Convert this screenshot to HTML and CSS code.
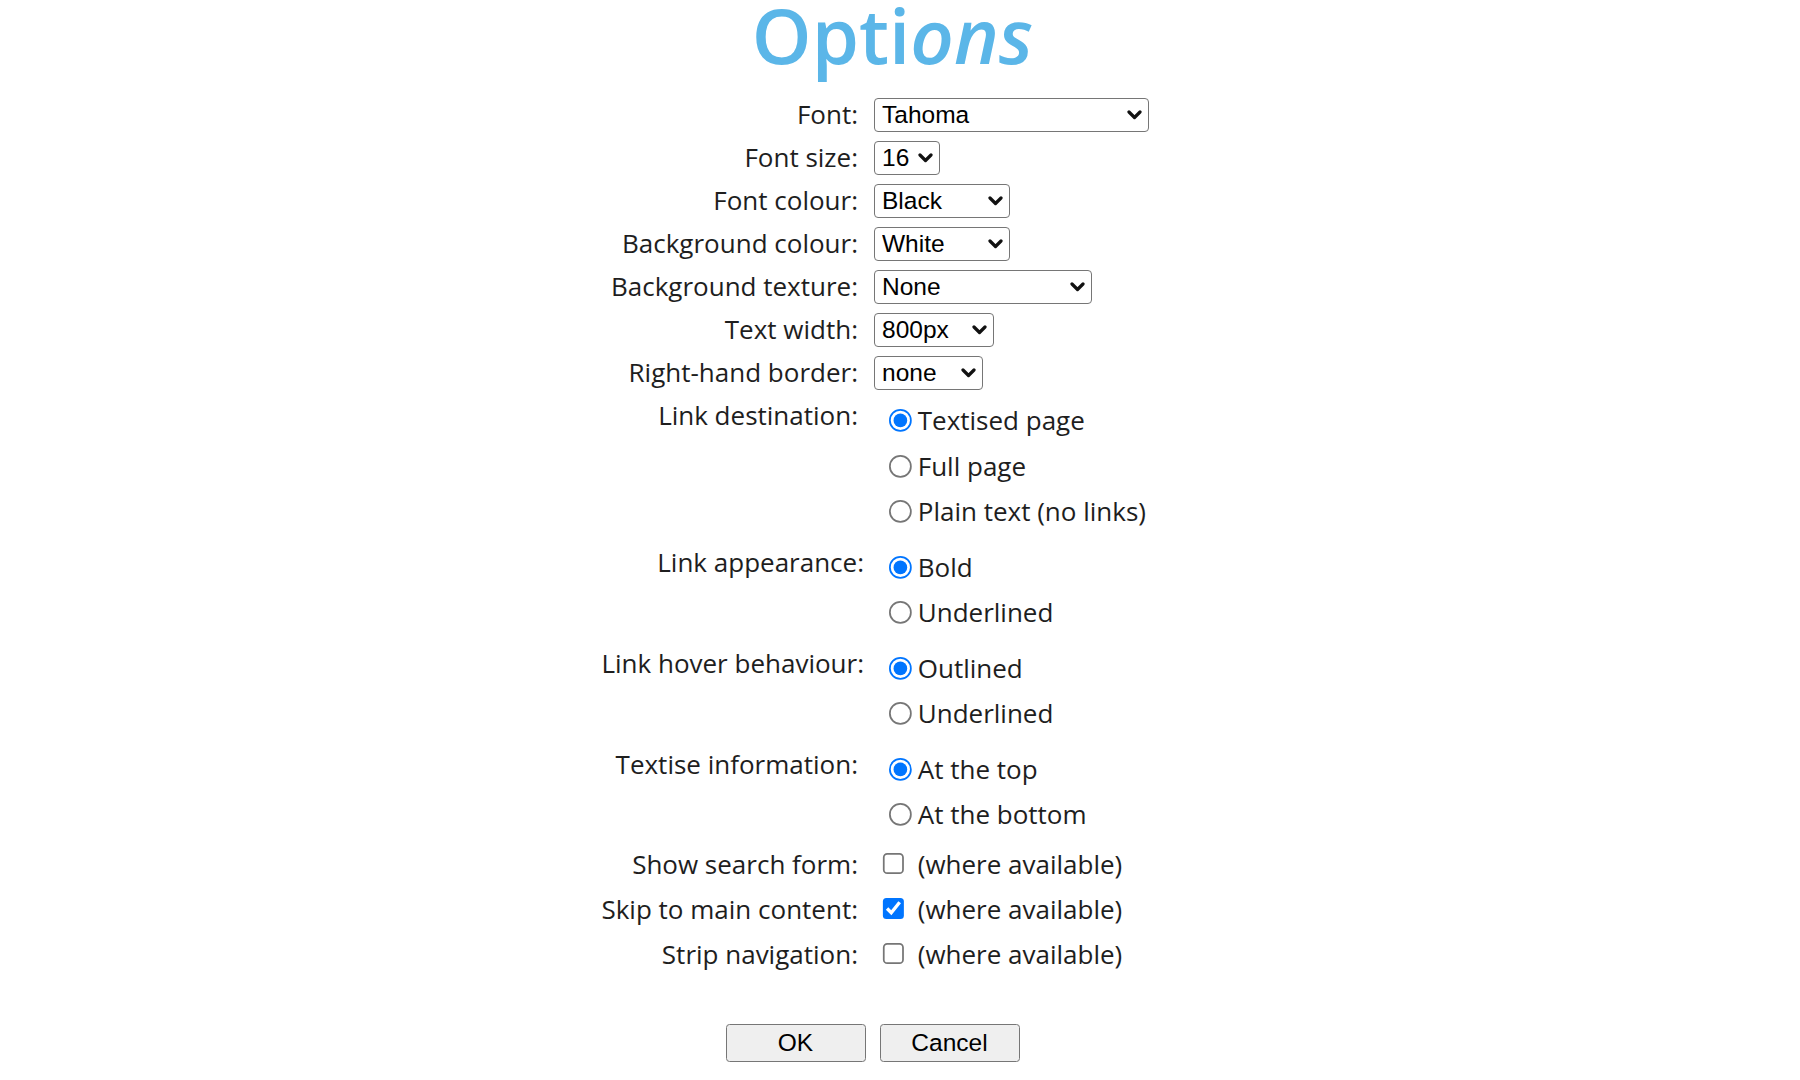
FILE: index.html
```html
<!DOCTYPE html>
<html lang="en">
<head>
<meta charset="utf-8">
<title>Options</title>
<link rel="stylesheet" href="styles.css">
</head>
<body>
<h1 class="title">Opti<em>ons</em></h1>
<form class="form">
  <div class="row row-select">
    <label class="lbl">Font:</label>
    <div class="ctl"><span class="selwrap w-font"><select class="sel"><option>Tahoma</option><option>Verdana</option><option>Arial</option></select><svg class="chev" viewBox="0 0 15 10" aria-hidden="true"><polyline points="2,2 7.5,7.5 13,2"/></svg></span></div>
  </div>
  <div class="row row-select">
    <label class="lbl">Font size:</label>
    <div class="ctl"><span class="selwrap w-size"><select class="sel"><option>16</option><option>12</option></select><svg class="chev" viewBox="0 0 15 10" aria-hidden="true"><polyline points="2,2 7.5,7.5 13,2"/></svg></span></div>
  </div>
  <div class="row row-select">
    <label class="lbl">Font colour:</label>
    <div class="ctl"><span class="selwrap w-colour"><select class="sel"><option>Black</option><option>White</option></select><svg class="chev" viewBox="0 0 15 10" aria-hidden="true"><polyline points="2,2 7.5,7.5 13,2"/></svg></span></div>
  </div>
  <div class="row row-select">
    <label class="lbl">Background colour:</label>
    <div class="ctl"><span class="selwrap w-colour"><select class="sel"><option>White</option><option>Black</option></select><svg class="chev" viewBox="0 0 15 10" aria-hidden="true"><polyline points="2,2 7.5,7.5 13,2"/></svg></span></div>
  </div>
  <div class="row row-select">
    <label class="lbl">Background texture:</label>
    <div class="ctl"><span class="selwrap w-texture"><select class="sel"><option>None</option></select><svg class="chev" viewBox="0 0 15 10" aria-hidden="true"><polyline points="2,2 7.5,7.5 13,2"/></svg></span></div>
  </div>
  <div class="row row-select">
    <label class="lbl">Text width:</label>
    <div class="ctl"><span class="selwrap w-width"><select class="sel"><option>800px</option></select><svg class="chev" viewBox="0 0 15 10" aria-hidden="true"><polyline points="2,2 7.5,7.5 13,2"/></svg></span></div>
  </div>
  <div class="row row-select">
    <label class="lbl">Right-hand border:</label>
    <div class="ctl"><span class="selwrap w-border"><select class="sel"><option>none</option></select><svg class="chev" viewBox="0 0 15 10" aria-hidden="true"><polyline points="2,2 7.5,7.5 13,2"/></svg></span></div>
  </div>

  <div class="row row-group">
    <div class="lbl lbl-top">Link destination:</div>
    <div class="ctl group">
      <label class="opt"><input type="radio" name="dest" checked><span>Textised page</span></label>
      <label class="opt"><input type="radio" name="dest"><span>Full page</span></label>
      <label class="opt"><input type="radio" name="dest"><span>Plain text (no links)</span></label>
    </div>
  </div>
  <div class="row row-group">
    <div class="lbl lbl-top lbl-shift">Link appearance:</div>
    <div class="ctl group">
      <label class="opt"><input type="radio" name="app" checked><span>Bold</span></label>
      <label class="opt"><input type="radio" name="app"><span>Underlined</span></label>
    </div>
  </div>
  <div class="row row-group">
    <div class="lbl lbl-top lbl-shift">Link hover behaviour:</div>
    <div class="ctl group">
      <label class="opt"><input type="radio" name="hover" checked><span>Outlined</span></label>
      <label class="opt"><input type="radio" name="hover"><span>Underlined</span></label>
    </div>
  </div>
  <div class="row row-group row-group-last">
    <div class="lbl lbl-top">Textise information:</div>
    <div class="ctl group">
      <label class="opt"><input type="radio" name="info" checked><span>At the top</span></label>
      <label class="opt"><input type="radio" name="info"><span>At the bottom</span></label>
    </div>
  </div>

  <div class="row row-check">
    <label class="lbl">Show search form:</label>
    <label class="ctl chk"><input type="checkbox"><span>(where available)</span></label>
  </div>
  <div class="row row-check">
    <label class="lbl">Skip to main content:</label>
    <label class="ctl chk"><input type="checkbox" checked><span>(where available)</span></label>
  </div>
  <div class="row row-check">
    <label class="lbl">Strip navigation:</label>
    <label class="ctl chk"><input type="checkbox"><span>(where available)</span></label>
  </div>

  <div class="buttons">
    <button type="button" class="btn">OK</button>
    <button type="button" class="btn">Cancel</button>
  </div>
</form>
</body>
</html>
```
FILE: styles.css
```css
html, body {
  margin: 0;
  padding: 0;
  background: #ffffff;
}

body {
  font-family: "Open Sans", "Noto Sans", sans-serif;
  color: #1e1e1e;
}

.title {
  margin: -3px 0 0 0;
  padding-right: 15px;
  text-align: center;
  font-family: "Open Sans", "Noto Sans", sans-serif;
  font-weight: 600;
  font-size: 76px;
  line-height: 76px;
  color: #5bb6e8;
}

.title em {
  font-style: italic;
}

.form {
  margin: 24px 0 0 0;
}

.row {
  width: 684px;
  margin: 0 auto;
  display: grid;
  grid-template-columns: 300px 368px;
  column-gap: 16px;
}

.lbl {
  text-align: right;
  font-size: 26px;
  line-height: 35px;
  white-space: nowrap;
}

.lbl-shift {
  margin-right: -6px;
}

.ctl {
  font-size: 26px;
  line-height: 35px;
}

.row-select {
  height: 34px;
  align-items: center;
  margin-bottom: 9px;
}

.selwrap {
  position: relative;
  display: block;
  height: 34px;
}

.w-font { width: 275px; }
.w-size { width: 66px; }
.w-colour { width: 136px; }
.w-texture { width: 218px; }
.w-width { width: 120px; }
.w-border { width: 109px; }

.sel {
  appearance: none;
  -webkit-appearance: none;
  display: block;
  box-sizing: border-box;
  width: 100%;
  height: 34px;
  margin: 0;
  padding: 0 28px 0 7px;
  border: 1.75px solid #767676;
  border-radius: 4px;
  background: #ffffff;
  font-family: "Liberation Sans", Arial, sans-serif;
  font-size: 24.5px;
  line-height: 30px;
  color: #000000;
}

.chev {
  position: absolute;
  right: 7px;
  top: 12px;
  width: 15px;
  height: 10px;
  pointer-events: none;
}

.chev polyline {
  fill: none;
  stroke: #111111;
  stroke-width: 3.2;
  stroke-linecap: round;
  stroke-linejoin: round;
}

.row-group {
  align-items: start;
  margin-bottom: 10px;
}

.row-group-last {
  margin-bottom: 4px;
}

.group {
  display: flex;
  flex-direction: column;
}

.opt {
  height: 45.5px;
  display: flex;
  align-items: center;
  gap: 6px;
  padding-left: 15px;
  white-space: nowrap;
}

.opt input,
.chk input {
  zoom: 1.75;
  margin: 0;
  flex: none;
}

.row-check {
  height: 45px;
  align-items: center;
}

.chk {
  display: flex;
  align-items: center;
  gap: 13px;
  padding-left: 8px;
  white-space: nowrap;
}

.buttons {
  display: flex;
  justify-content: center;
  gap: 14px;
  padding-right: 55px;
  margin-top: 47.5px;
}

.btn {
  zoom: 1.75;
  width: 80px;
  height: 21.7px;
  padding: 0;
  margin: 0;
  font-family: "Liberation Sans", Arial, sans-serif;
  font-size: 14px;
  color: #000;
}
```
